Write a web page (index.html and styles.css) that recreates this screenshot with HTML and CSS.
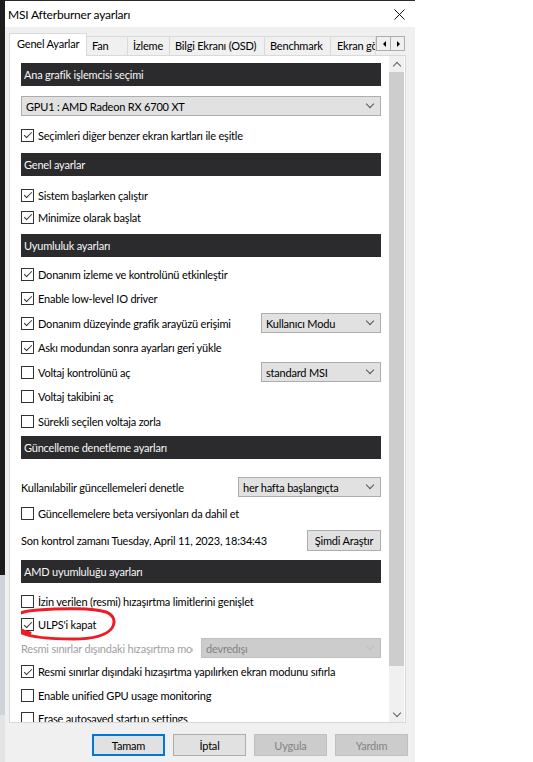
FILE: index.html
```html
<!DOCTYPE html>
<html lang="tr">

<head>
    <meta charset="UTF-8">
    <title>MSI Afterburner ayarları</title>
    <link rel="stylesheet" href="styles.css">
</head>

<body>
    <div class="desk"></div>
    <div class="window">
        <div class="titlebar">
            <span class="title">MSI Afterburner ayarları</span>
            <svg class="close" width="11" height="11" viewBox="0 0 11 11">
                <path d="M0.5 0.5L10.5 10.5M10.5 0.5L0.5 10.5" stroke="#111" stroke-width="1" fill="none" />
            </svg>
        </div>

        <div class="body">
            <div class="tabs">
                <div class="tab active">Genel Ayarlar</div>
                <div class="tab t-fan">Fan</div>
                <div class="tab t-izleme">İzleme</div>
                <div class="tab t-bilgi">Bilgi Ekranı (OSD)</div>
                <div class="tab t-bench">Benchmark</div>
                <div class="tab t-ekran">Ekran görüntüsü</div>
                <div class="tab-arrows">
                    <span class="arrow left"></span>
                    <span class="arrow right"></span>
                </div>
            </div>

            <div class="panel">
                <div class="content">
                    <div class="sec-title">Ana grafik işlemcisi seçimi</div>
                    <div class="group g-gpu">
                        <div class="row">
                            <div class="select full">GPU1 : AMD Radeon RX 6700 XT<i class="chev"></i></div>
                        </div>
                        <label class="row"><span class="box on"></span>Seçimleri diğer benzer ekran kartları ile eşitle</label>
                    </div>

                    <div class="sec-title">Genel ayarlar</div>
                    <div class="group g-general">
                        <label class="row"><span class="box on"></span>Sistem başlarken çalıştır</label>
                        <label class="row"><span class="box on"></span>Minimize olarak başlat</label>
                    </div>

                    <div class="sec-title">Uyumluluk ayarları</div>
                    <div class="group g-compat">
                        <label class="row"><span class="box on"></span>Donanım izleme ve kontrolünü etkinleştir</label>
                        <label class="row"><span class="box on"></span>Enable low-level IO driver</label>
                        <div class="row">
                            <span class="box on"></span><span class="grow">Donanım düzeyinde grafik arayüzü erişimi</span>
                            <div class="select w120">Kullanıcı Modu<i class="chev"></i></div>
                        </div>
                        <label class="row"><span class="box on"></span>Askı modundan sonra ayarları geri yükle</label>
                        <div class="row">
                            <span class="box"></span><span class="grow">Voltaj kontrolünü aç</span>
                            <div class="select w120">standard MSI<i class="chev"></i></div>
                        </div>
                        <label class="row"><span class="box"></span>Voltaj takibini aç</label>
                        <label class="row"><span class="box"></span>Sürekli seçilen voltaja zorla</label>
                    </div>

                    <div class="sec-title">Güncelleme denetleme ayarları</div>
                    <div class="group g-update">
                        <div class="row">
                            <span class="grow">Kullanılabilir güncellemeleri denetle</span>
                            <div class="select w143">her hafta başlangıçta<i class="chev"></i></div>
                        </div>
                        <label class="row"><span class="box"></span>Güncellemelere beta versiyonları da dahil et</label>
                        <div class="row">
                            <span class="grow">Son kontrol zamanı Tuesday, April 11, 2023, 18:34:43</span>
                            <button class="btn small">Şimdi Araştır</button>
                        </div>
                    </div>

                    <div class="sec-title">AMD uyumluluğu ayarları</div>
                    <div class="group g-amd">
                        <label class="row"><span class="box"></span>İzin verilen (resmi) hızaşırtma limitlerini genişlet</label>
                        <label class="row"><span class="box on"></span>ULPS'i kapat
                            <svg class="scribble" width="110" height="38" viewBox="0 0 110 38">
                                <path d="M22 27 C12 24 3 20 4 15 C5 9 14 5 30 4 C55 2 85 2 98 6 C106 9 108 16 104 22 C99 29 85 33 65 33 C45 33 25 32 14 27 C9 25 7 22 9 19"
                                    fill="none" stroke="#ee1c24" stroke-width="3" stroke-linecap="round" />
                            </svg>
                        </label>
                        <div class="row disabled">
                            <span class="cut">Resmi sınırlar dışındaki hızaşırtma modu</span>
                            <div class="select off w180">devredışı<i class="chev"></i></div>
                        </div>
                        <label class="row"><span class="box on"></span>Resmi sınırlar dışındaki hızaşırtma yapılırken ekran modunu sıfırla</label>
                        <label class="row"><span class="box"></span>Enable unified GPU usage monitoring</label>
                        <label class="row"><span class="box"></span>Erase autosaved startup settings</label>
                    </div>
                </div>

                <div class="scrollbar">
                    <div class="sb-btn"><i class="sb-chev up"></i></div>
                    <div class="thumb"></div>
                    <div class="track"></div>
                    <div class="sb-btn"><i class="sb-chev down"></i></div>
                </div>
            </div>

            <div class="buttons">
                <button class="btn focus">Tamam</button>
                <button class="btn">İptal</button>
                <button class="btn off">Uygula</button>
                <button class="btn off">Yardım</button>
            </div>
        </div>
    </div>
</body>

</html>
```

FILE: styles.css
```css
body {
    margin: 0;
    width: 533px;
    height: 762px;
    overflow: hidden;
    display: flex;
    background: #fff;
    font-family: Lato, "Liberation Sans", sans-serif;
    font-size: 11px;
    letter-spacing: -0.2px;
    color: #000;
}

.desk {
    width: 5px;
    background: linear-gradient(#1d1d1d 0 575px, #cdd3d8 575px 715px, #e4e4e4 715px);
}

.window {
    width: 410px;
    border-top: 1px solid #2b2b2b;
    display: flex;
    flex-direction: column;
}

.titlebar {
    height: 26px;
    background: #fff;
    display: flex;
    align-items: center;
    justify-content: space-between;
    padding: 0 10px 0 3px;
}

.title {
    font-size: 12px;
}

.body {
    flex: 1;
    background: #f0f0f0;
    padding: 6px 7px 0 4px;
}

/* tabs */

.tabs {
    display: flex;
    align-items: flex-end;
    height: 22px;
}

.tab {
    box-sizing: border-box;
    height: 19px;
    line-height: 18px;
    padding: 0 5px;
    margin-left: -1px;
    border: 1px solid #d9d9d9;
    border-bottom: none;
    background: #f0f0f0;
    white-space: nowrap;
    overflow: hidden;
}

.tab.active {
    position: relative;
    z-index: 1;
    width: 78px;
    height: 23px;
    line-height: 20px;
    margin: 0 0 -1px 0;
    padding: 0 7px;
    background: #fff;
}

.t-fan {
    width: 42px;
}

.t-izleme {
    width: 43px;
}

.t-bilgi {
    width: 96px;
}

.t-bench {
    width: 67px;
}

.t-ekran {
    width: 46px;
    padding-left: 6px;
}

.tab-arrows {
    align-self: flex-start;
    display: flex;
    margin-top: 3px;
}

.arrow {
    box-sizing: border-box;
    width: 15px;
    height: 15px;
    border: 1px solid #adadad;
    background: #f0f0f0;
    position: relative;
}

.arrow + .arrow {
    margin-left: -1px;
}

.arrow::after {
    content: "";
    position: absolute;
    top: 4px;
    border: 3px solid transparent;
}

.arrow.left::after {
    left: 3px;
    border-right: 3px solid #000;
}

.arrow.right::after {
    left: 6px;
    border-left: 3px solid #000;
}

/* panel */

.panel {
    box-sizing: border-box;
    width: 397px;
    height: 668px;
    display: flex;
    border: 1px solid #d9d9d9;
    background: #fff;
}

.content {
    width: 360px;
    margin-left: 11px;
    padding-top: 7px;
    overflow: hidden;
}

.sec-title {
    height: 23px;
    line-height: 23px;
    padding-left: 3px;
    background: #2b2b2e;
    color: #f7f7f7;
}

.group {
    display: flex;
    flex-direction: column;
}

.g-gpu {
    padding: 9px 0 7px;
    gap: 7px;
}

.g-general {
    padding: 8px 0 6px;
}

.g-compat {
    padding: 6px 0 4px;
    gap: 2.5px;
}

.g-update {
    padding: 17px 0 9px;
    gap: 4.5px;
}

.g-amd {
    padding: 7px 0 0;
    gap: 1.6px;
}

.row {
    position: relative;
    height: 22px;
    display: flex;
    align-items: center;
    white-space: nowrap;
}

.grow {
    flex: 1;
}

.box {
    position: relative;
    flex: none;
    width: 11px;
    height: 11px;
    margin-right: 4px;
    border: 1px solid #333;
    background: #fff;
}

.box.on::after {
    content: "";
    position: absolute;
    left: 3.5px;
    top: 0.5px;
    width: 3px;
    height: 7px;
    border: solid #333;
    border-width: 0 1px 1px 0;
    transform: rotate(45deg);
}

.select {
    box-sizing: border-box;
    height: 20px;
    display: flex;
    align-items: center;
    justify-content: space-between;
    padding: 0 5px 0 4px;
    border: 1px solid #adadad;
    background: #e1e1e1;
}

.select.full {
    width: 360px;
}

.w120 {
    width: 120px;
}

.w143 {
    width: 143px;
}

.w180 {
    width: 180px;
}

.chev {
    width: 5px;
    height: 5px;
    margin: 0 2px 4px 0;
    border: solid #555;
    border-width: 0 1px 1px 0;
    transform: rotate(45deg);
}

.select.off {
    background: #cccccc;
    border-color: #bfbfbf;
    color: #838383;
}

.select.off .chev {
    border-color: #bfbfbf;
}

.disabled {
    justify-content: space-between;
}

.cut {
    width: 172px;
    overflow: hidden;
    color: #a0a0a0;
}

.scribble {
    position: absolute;
    left: -13px;
    top: -8px;
}

/* scrollbar */

.scrollbar {
    width: 15px;
    margin-left: 8px;
    display: flex;
    flex-direction: column;
    background: #f0f0f0;
}

.sb-btn {
    height: 16px;
    display: flex;
    align-items: center;
    justify-content: center;
}

.sb-chev {
    width: 5px;
    height: 5px;
    border: solid #606060;
    border-width: 1.5px 0 0 1.5px;
    transform: rotate(45deg);
}

.sb-chev.up {
    margin-top: 3px;
}

.sb-chev.down {
    transform: rotate(225deg);
    margin-bottom: 3px;
}

.thumb {
    height: 594px;
    background: #cdcdcd;
}

.track {
    flex: 1;
}

/* buttons */

.btn {
    box-sizing: border-box;
    width: 73px;
    height: 22px;
    padding: 0;
    font: inherit;
    letter-spacing: inherit;
    color: #000;
    border: 1px solid #adadad;
    background: #e1e1e1;
}

.btn.small {
    width: 74px;
    height: 21px;
}

.btn.focus {
    border: 2px solid #0078d7;
}

.btn.off {
    background: #cccccc;
    border-color: #bfbfbf;
    color: #838383;
}

.buttons {
    display: flex;
    justify-content: flex-end;
    gap: 8px;
    margin-top: 11px;
}
```
